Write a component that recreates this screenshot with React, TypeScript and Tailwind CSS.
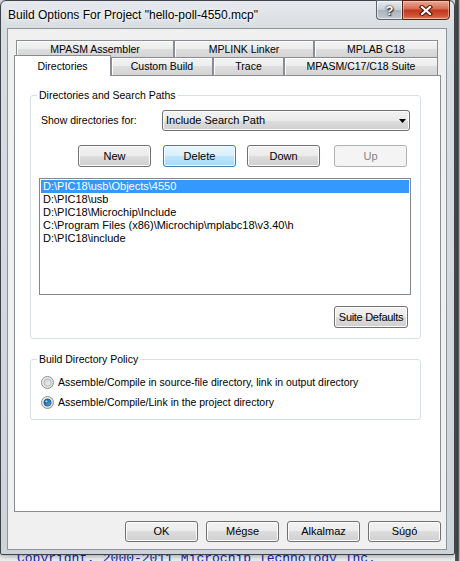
import React from "react";

const sans = "font-['Liberation_Sans',Arial,sans-serif]";

type BtnState = "normal" | "hot" | "disabled";

function PushButton({
  label,
  className = "",
  state = "normal",
}: {
  label: string;
  className?: string;
  state?: BtnState;
}) {
  const look =
    state === "hot"
      ? "border-[#3c7fb1] bg-[linear-gradient(#eaf6fd_0%,#d9f0fc_50%,#bee6fd_50%,#a7d9f5_100%)] shadow-[inset_0_0_0_1px_#f4fbfe] text-black"
      : state === "disabled"
      ? "border-[#adb2b5] bg-[#f4f4f4] text-[#838383]"
      : "border-[#707070] bg-[linear-gradient(#f2f2f2_0%,#ebebeb_50%,#dddddd_50%,#cfcfcf_100%)] shadow-[inset_0_0_0_1px_#fcfcfc] text-black";
  return (
    <div
      className={`flex shrink-0 items-center justify-center whitespace-nowrap rounded-[3px] border text-[11px] leading-none ${look} ${className}`}
    >
      {label}
    </div>
  );
}

function BackTab({ label, className }: { label: string; className: string }) {
  return (
    <div
      className={`flex h-full shrink-0 items-center justify-center border border-b-0 border-[#898c95] bg-[linear-gradient(#f3f3f3,#ececec_50%,#dedede_50%,#d4d4d4)] shadow-[inset_1px_1px_0_#ffffff] text-[10.5px] leading-none text-black ${className}`}
    >
      {label}
    </div>
  );
}

function Radio({ checked }: { checked: boolean }) {
  const id = checked ? "rbOn" : "rbOff";
  return (
    <svg width="13" height="13" viewBox="0 0 13 13" className="shrink-0">
      <defs>
        <linearGradient id={`${id}Ring`} x1="0" y1="0" x2="1" y2="1">
          <stop offset="0" stopColor="#f6f6f6" />
          <stop offset="1" stopColor="#d6d6d6" />
        </linearGradient>
        <linearGradient id={`${id}Dot`} x1="0" y1="0" x2="1" y2="1">
          {checked ? (
            <>
              <stop offset="0" stopColor="#0d4f82" />
              <stop offset="0.6" stopColor="#2f86c3" />
              <stop offset="1" stopColor="#7fd0f7" />
            </>
          ) : (
            <>
              <stop offset="0" stopColor="#c7cacd" />
              <stop offset="1" stopColor="#f7f7f7" />
            </>
          )}
        </linearGradient>
      </defs>
      <circle cx="6.5" cy="6.5" r="6" fill={`url(#${id}Ring)`} stroke="#8e8f8f" />
      <circle cx="6.5" cy="6.5" r="3.6" fill={`url(#${id}Dot)`} stroke={checked ? "#1c4f78" : "#a9adb1"} strokeWidth="0.8" />
      {checked && <circle cx="5.4" cy="5.3" r="1.1" fill="#bfe6ff" opacity="0.8" />}
    </svg>
  );
}

function GroupBox({
  title,
  className,
  children,
}: {
  title: string;
  className: string;
  children: React.ReactNode;
}) {
  return (
    <div className={`relative shrink-0 rounded-[3px] border border-[#d5dfe5] ${className}`}>
      <span className="absolute left-[6px] -top-[7px] bg-white px-[2px] text-[10.5px] leading-[13px] text-black">
        {title}
      </span>
      {children}
    </div>
  );
}

const paths = [
  "D:\\PIC18\\usb\\Objects\\4550",
  "D:\\PIC18\\usb",
  "D:\\PIC18\\Microchip\\Include",
  "C:\\Program Files (x86)\\Microchip\\mplabc18\\v3.40\\h",
  "D:\\PIC18\\include",
];

export default function App() {
  return (
    <div className={`relative h-[561px] w-[460px] overflow-hidden bg-[#eceef0] ${sans}`}>
      {/* editor window behind the dialog */}
      <div className="absolute left-[455px] top-0 h-full w-[5px] bg-[linear-gradient(90deg,#5b5f63,#3a3d40_60%,#d8dadc)]" />
      <div className="absolute left-[17px] top-[552px] whitespace-nowrap font-['Liberation_Mono',monospace] text-[13px] leading-[13px] text-[#1a22b0]">
        Copyright, 2000-2011 Microchip Technology Inc.
      </div>

      {/* dialog window */}
      <div className="absolute left-0 top-0 flex h-[555px] w-[455px] flex-col rounded-t-[6px] rounded-b-[2px] border border-[#3e4349] bg-[linear-gradient(180deg,#e6e9ed_0px,#d8dde2_28px,#cdd3d9_100%)] shadow-[0_0_6px_rgba(0,0,0,0.45)]">
        {/* caption */}
        <div className="flex h-[27px] shrink-0 items-start">
          <div className="whitespace-nowrap pl-[7px] pt-[7px] text-[12px] leading-[14px] text-black [text-shadow:0_0_6px_#ffffff,0_0_3px_#ffffff]">
            Build Options For Project &quot;hello-poll-4550.mcp&quot;
          </div>
          <div className="-mt-px ml-auto mr-[4px] flex h-[20px]">
            <div className="flex w-[26px] items-center justify-center rounded-bl-[4px] border border-r-0 border-[#5b626a] bg-[linear-gradient(#e9ecef,#c5ccd3_50%,#a9b2bb_50%,#c2c9d0)] shadow-[inset_0_0_0_1px_rgba(255,255,255,0.6)]">
              <span className="text-[13px] font-bold leading-none text-white [text-shadow:0_0_1px_#222,0_0_2px_#222,1px_1px_1px_#333]">
                ?
              </span>
            </div>
            <div className="flex w-[48px] items-center justify-center rounded-br-[4px] border border-[#5a1b10] bg-[linear-gradient(#e9a995,#d46a4f_45%,#c1361c_50%,#d2563a_85%,#e08a6c)] shadow-[inset_0_0_0_1px_rgba(255,220,200,0.5)]">
              <svg width="14" height="11" viewBox="0 0 14 11">
                <path d="M3 2l8 7M11 2l-8 7" stroke="#4a1208" strokeWidth="4.2" strokeLinecap="square" />
                <path d="M3 2l8 7M11 2l-8 7" stroke="#ffffff" strokeWidth="2.2" strokeLinecap="square" />
              </svg>
            </div>
          </div>
        </div>

        {/* client area */}
        <div className="ml-[6px] flex h-[522px] w-[440px] shrink-0 flex-col border border-[#8d949c] bg-[#f0f0f0]">
          {/* back tab row */}
          <div className="ml-[8px] mt-[11px] flex h-[17px] shrink-0">
            <BackTab label="MPASM Assembler" className="w-[158px]" />
            <BackTab label="MPLINK Linker" className="w-[140px]" />
            <BackTab label="MPLAB C18" className="w-[124px]" />
          </div>
          {/* front tab row */}
          <div className="ml-[6px] flex h-[18px] shrink-0 items-start">
            <div className="relative z-10 -mt-[2px] flex h-[21px] w-[97px] shrink-0 items-center justify-center border border-b-0 border-[#898c95] bg-white text-[10.5px] leading-none text-black">
              Directories
            </div>
            <BackTab label="Custom Build" className="w-[102px]" />
            <BackTab label="Trace" className="w-[71px]" />
            <BackTab label="MPASM/C17/C18 Suite" className="w-[154px]" />
          </div>

          {/* tab page */}
          <div className="ml-[6px] flex h-[437px] w-[427px] shrink-0 flex-col border border-[#898c95] bg-white">
            <GroupBox title="Directories and Search Paths" className="ml-[15px] mt-[19px] h-[244px] w-[391px]">
              <div className="mt-[14px] flex h-[21px] items-center">
                <span className="ml-[10px] w-[121px] shrink-0 whitespace-nowrap text-[10.5px] leading-none text-black">
                  Show directories for:
                </span>
                <div className="flex h-[21px] w-[248px] shrink-0 items-center rounded-[3px] border border-[#707070] bg-[linear-gradient(#f2f2f2_0%,#ebebeb_50%,#dddddd_50%,#cfcfcf_100%)] pl-[3px] pr-[3px] shadow-[inset_0_0_0_1px_#fcfcfc] text-[11px] leading-none text-black">
                  <span>Include Search Path</span>
                  <svg className="ml-auto" width="7" height="4" viewBox="0 0 7 4">
                    <path d="M0 0h7L3.5 4z" fill="#000000" />
                  </svg>
                </div>
              </div>

              <div className="mt-[14px] flex h-[22px]">
                <PushButton label="New" className="ml-[47px] h-[22px] w-[73px]" />
                <PushButton label="Delete" state="hot" className="ml-[12px] h-[22px] w-[73px]" />
                <PushButton label="Down" className="ml-[11px] h-[22px] w-[73px]" />
                <PushButton label="Up" state="disabled" className="ml-[14px] h-[22px] w-[73px]" />
              </div>

              <div className="ml-[8px] mt-[11px] flex h-[117px] w-[372px] flex-col border border-[#828790] bg-white pt-[1px]">
                {paths.map((p, i) => (
                  <div
                    key={p}
                    className={`mx-[1px] h-[13px] whitespace-nowrap pl-[2px] text-[11px] leading-[13px] ${
                      i === 0 ? "bg-[#3399ff] text-white" : "text-black"
                    }`}
                  >
                    {p}
                  </div>
                ))}
              </div>

              <PushButton label="Suite Defaults" className="ml-[303px] mt-[11px] h-[22px] w-[74px] tracking-[-0.3px]" />
            </GroupBox>

            <GroupBox title="Build Directory Policy" className="ml-[15px] mt-[20px] h-[61px] w-[391px]">
              <div className="mt-[12px] flex flex-col">
                <div className="flex h-[20px] items-center gap-[4px] pl-[10px]">
                  <Radio checked={false} />
                  <span className="whitespace-nowrap text-[10.5px] leading-none text-black">
                    Assemble/Compile in source-file directory, link in output directory
                  </span>
                </div>
                <div className="flex h-[20px] items-center gap-[4px] pl-[10px]">
                  <Radio checked />
                  <span className="whitespace-nowrap text-[10.5px] leading-none text-black">
                    Assemble/Compile/Link in the project directory
                  </span>
                </div>
              </div>
            </GroupBox>
          </div>

          {/* dialog buttons */}
          <div className="mr-[5px] mt-[9px] flex justify-end gap-[8px]">
            <PushButton label="OK" className="h-[21px] w-[73px]" />
            <PushButton label="Mégse" className="h-[21px] w-[73px]" />
            <PushButton label="Alkalmaz" className="h-[21px] w-[73px]" />
            <PushButton label="Súgó" className="h-[21px] w-[73px]" />
          </div>
        </div>
      </div>
    </div>
  );
}
